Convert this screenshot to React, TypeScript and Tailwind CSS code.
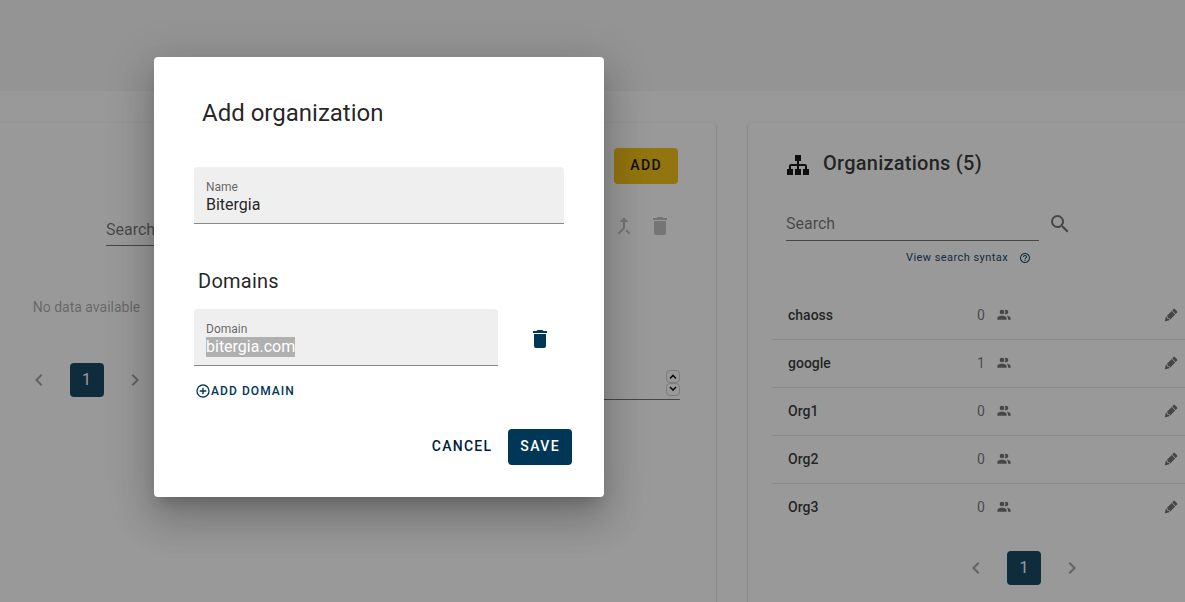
import { useEffect, useRef } from "react";
import type { ReactNode } from "react";
import {
  MdCallMerge,
  MdChevronLeft,
  MdChevronRight,
  MdHelpOutline,
} from "react-icons/md";

const icons = {
  sitemap:
    "M9,2V8H11V11H5C3.89,11 3,11.89 3,13V16H1V22H7V16H5V13H11V16H9V22H15V16H13V13H19V16H17V22H23V16H21V13C21,11.89 20.11,11 19,11H13V8H15V2H9Z",
  accounts:
    "M16 17V19H2V17S2 13 9 13 16 17 16 17M12.5 7.5A3.5 3.5 0 1 0 9 11A3.5 3.5 0 0 0 12.5 7.5M15.94 13A5.32 5.32 0 0 1 18 17V19H22V17S22 13.37 15.94 13M15 4A3.39 3.39 0 0 0 13.07 4.59A5 5 0 0 1 13.07 10.41A3.39 3.39 0 0 0 15 11A3.5 3.5 0 0 0 15 4Z",
  pencil:
    "M16.84,2.73C16.45,2.73 16.07,2.88 15.77,3.17L13.65,5.29L18.95,10.6L21.07,8.5C21.67,7.89 21.67,6.94 21.07,6.36L17.9,3.17C17.6,2.88 17.22,2.73 16.84,2.73M12.94,6L4.84,14.11L7.4,14.39L7.58,16.68L9.86,16.85L10.15,19.41L18.25,11.3M4.25,15.04L2.5,21.73L9.2,19.94L8.96,17.78L6.65,17.61L6.47,15.29",
  magnify:
    "M9.5,3A6.5,6.5 0 0,1 16,9.5C16,11.11 15.41,12.59 14.44,13.73L14.71,14H15.5L20.5,19L19,20.5L14,15.5V14.71L13.73,14.44C12.59,15.41 11.11,16 9.5,16A6.5,6.5 0 0,1 3,9.5A6.5,6.5 0 0,1 9.5,3M9.5,5C7,5 5,7 5,9.5C5,12 7,14 9.5,14C12,14 14,12 14,9.5C14,7 12,5 9.5,5Z",
  plus: "M12,20C7.59,20 4,16.41 4,12C4,7.59 7.59,4 12,4C16.41,4 20,7.59 20,12C20,16.41 16.41,20 12,20M12,2A10,10 0 0,0 2,12A10,10 0 0,0 12,22A10,10 0 0,0 22,12A10,10 0 0,0 12,2M13,7H11V11H7V13H11V17H13V13H17V11H13V7Z",
  trash:
    "M19,4H15.5L14.5,3H9.5L8.5,4H5V6H19M6,19A2,2 0 0,0 8,21H16A2,2 0 0,0 18,19V7H6V19Z",
};

function Icon({ name, className }: { name: keyof typeof icons; className: string }) {
  return (
    <svg viewBox="0 0 24 24" fill="currentColor" aria-hidden="true" className={className}>
      <path d={icons[name]} />
    </svg>
  );
}

function Pager() {
  return (
    <nav aria-label="Pagination" className="flex items-center justify-center gap-[19px]">
      <button type="button" aria-label="Previous page" className="text-black/40">
        <MdChevronLeft className="size-6" />
      </button>
      <button type="button" className="size-[34px] rounded bg-[#003756] text-base text-white">
        1
      </button>
      <button type="button" aria-label="Next page" className="text-black/40">
        <MdChevronRight className="size-6" />
      </button>
    </nav>
  );
}

function Card({ className, children }: { className: string; children: ReactNode }) {
  return (
    <section
      className={`rounded bg-white shadow-[0_2px_1px_-1px_rgba(0,0,0,0.2),0_1px_1px_0_rgba(0,0,0,0.16),0_1px_3px_0_rgba(0,0,0,0.24)] ${className}`}
    >
      {children}
    </section>
  );
}

function IndividualsCard() {
  return (
    <Card className="-ml-2 min-w-0 flex-1 pt-[25px] pr-9 pl-2">
      <div className="flex justify-end pr-0.5">
        <button
          type="button"
          className="h-9 rounded bg-[#f4bc00] px-4 pb-0.5 text-sm font-medium tracking-widest text-black"
        >
          ADD
        </button>
      </div>
      <div className="mt-7 flex items-start pr-2 pl-[106px]">
        <input
          aria-label="Search individuals"
          placeholder="Search"
          className="h-[34px] min-w-0 flex-1 border-b border-black/60 pt-0.5 text-base placeholder:text-black/60"
        />
        <button type="button" aria-label="Merge" className="mt-0.5 ml-8 text-black/26">
          <MdCallMerge className="size-6" />
        </button>
        <button type="button" aria-label="Delete" className="mt-0.5 ml-3 text-black/26">
          <Icon name="trash" className="size-6" />
        </button>
      </div>
      <p className="mt-[51px] w-[173px] text-center text-sm text-black/38">No data available</p>
      <div className="mt-[46px] flex items-start">
        <div className="w-[173px]">
          <Pager />
        </div>
        <label className="ml-auto flex h-[37px] w-40 items-end border-b border-black/60">
          <input aria-label="Items per page" className="min-w-0 flex-1" />
          <span className="mb-[3px] flex flex-col text-black">
            <Spin label="Increase" d="M4 8.5 7 5.5 10 8.5" />
            <Spin label="Decrease" d="M4 4 7 7 10 4" />
          </span>
        </label>
      </div>
    </Card>
  );
}

function Spin({ label, d }: { label: string; d: string }) {
  return (
    <button
      type="button"
      aria-label={label}
      className="flex h-[13px] w-3.5 items-center justify-center rounded border border-black/20"
    >
      <svg viewBox="0 0 14 13" fill="none" stroke="currentColor" strokeWidth="1.6" className="h-[13px] w-3.5 shrink-0">
        <path d={d} />
      </svg>
    </button>
  );
}

const organizations = [
  { name: "chaoss", people: 0 },
  { name: "google", people: 1 },
  { name: "Org1", people: 0 },
  { name: "Org2", people: 0 },
  { name: "Org3", people: 0 },
];

function OrganizationsCard() {
  return (
    <Card className="-mr-2 w-[445px] shrink-0 pt-6 pr-2 pl-6">
      <h2 className="flex h-8 items-center gap-[13px] pl-3.5 text-xl font-medium tracking-[0.0125em] text-black/87">
        <Icon name="sitemap" className="mt-1 size-6 text-black" />
        Organizations (5)
      </h2>
      <div className="mt-7 flex items-center pl-3.5">
        <input
          aria-label="Search organizations"
          placeholder="Search"
          className="h-[34px] w-[253px] border-b border-black/60 text-base placeholder:text-black/60"
        />
        <button type="button" aria-label="Search" className="ml-[9px] text-black/60">
          <Icon name="magnify" className="size-6" />
        </button>
      </div>
      <a
        href="#syntax"
        className="mt-2.5 ml-[134px] flex h-3.5 items-center gap-[11px] text-[11px] tracking-[0.04em] text-[#003756]"
      >
        View search syntax
        <MdHelpOutline className="size-3" />
      </a>
      <table className="mt-[26px] w-full text-sm">
        <tbody>
          {organizations.map((org) => (
            <tr key={org.name} className="h-12 border-b border-black/12 last:border-0">
              <td className="w-[205px] pl-4 font-medium text-black/87">{org.name}</td>
              <td className="text-black/60">
                <span className="flex items-center gap-[11px]">
                  {org.people}
                  <Icon name="accounts" className="size-4" />
                </span>
              </td>
              <td className="w-[22px] pr-1.5 text-black/60">
                <button type="button" aria-label={`Edit ${org.name}`} className="block">
                  <Icon name="pencil" className="size-4" />
                </button>
              </td>
            </tr>
          ))}
        </tbody>
      </table>
      <div className="mt-5 w-[504px]">
        <Pager />
      </div>
    </Card>
  );
}

function Field({
  id,
  label,
  value,
  selected,
  className,
}: {
  id: string;
  label: string;
  value: string;
  selected?: boolean;
  className: string;
}) {
  const input = useRef<HTMLInputElement>(null);
  useEffect(() => {
    if (selected) input.current?.select();
  }, [selected]);
  return (
    <div className={`flex h-[57px] flex-col rounded-t border-b border-black/42 bg-[#efefef] px-3 pt-3 ${className}`}>
      <label htmlFor={id} className="text-xs text-black/60">
        {label}
      </label>
      <input
        id={id}
        ref={input}
        defaultValue={value}
        className="h-5 w-full text-base leading-5 text-black/87 outline-none selection:bg-[#b0b0b0] selection:text-white"
      />
    </div>
  );
}

function AddOrganizationDialog() {
  return (
    <form
      role="dialog"
      aria-labelledby="dialog-title"
      className="w-[450px] rounded bg-white px-10 pt-10 pb-8 text-black/87 shadow-[0_11px_15px_-7px_rgba(0,0,0,0.2),0_24px_38px_3px_rgba(0,0,0,0.14),0_9px_46px_8px_rgba(0,0,0,0.12)]"
    >
      <h1 id="dialog-title" className="pl-2 text-2xl">
        Add organization
      </h1>
      <Field id="name" label="Name" value="Bitergia" className="mt-[38px]" />
      <h2 className="mt-[43px] pl-1 text-xl tracking-[0.0125em]">Domains</h2>
      <div className="mt-3.5 flex items-center">
        <Field id="domain" label="Domain" value="bitergia.com" selected className="flex-1" />
        <button type="button" aria-label="Delete domain" className="mr-3 ml-[30px] pt-0.5 text-[#003756]">
          <Icon name="trash" className="size-6" />
        </button>
      </div>
      <button
        type="button"
        className="mt-4 flex h-[18px] items-center pl-px text-xs font-medium tracking-[0.0892857em] text-[#003756]"
      >
        <Icon name="plus" className="size-4" />
        ADD DOMAIN
      </button>
      <div className="-mr-2 mt-[29px] flex justify-end gap-1">
        <button
          type="button"
          className="h-9 px-3 pb-0.5 text-sm font-medium tracking-[0.0892857em] text-[#001e40]"
        >
          CANCEL
        </button>
        <button
          type="button"
          className="h-9 rounded bg-[#003756] px-3 pb-0.5 text-sm font-medium tracking-widest text-white"
        >
          SAVE
        </button>
      </div>
    </form>
  );
}

export default function App() {
  return (
    <div className="relative flex h-screen min-h-[600px] flex-col overflow-hidden bg-white font-[Roboto,sans-serif]">
      <header className="h-[91px] shrink-0 bg-[#f5f5f5]" />
      <main className="-mb-2 flex flex-1 gap-8 pt-8">
        <IndividualsCard />
        <OrganizationsCard />
      </main>
      <div className="absolute inset-0 flex items-start bg-[#212121]/46 pt-[57px] pl-[154px]">
        <AddOrganizationDialog />
      </div>
    </div>
  );
}
